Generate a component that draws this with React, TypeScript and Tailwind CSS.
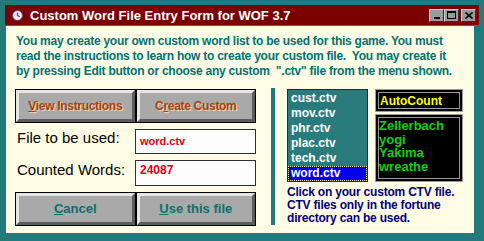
import { type ReactNode } from 'react'

const font = { fontFamily: '"Liberation Sans", Arial, sans-serif' }

function BevelButton({ children, className = '' }: { children: ReactNode; className?: string }) {
  return (
    <div className="flex-1 border border-black">
      <div className={`flex h-full items-center justify-center border-t-[3px] border-l-[3px] border-b-[3px] border-r-[3px] border-t-[#e6e6e6] border-l-[#e6e6e6] border-b-[#5c5c5c] border-r-[#5c5c5c] bg-[#a9a9a9] ${className}`}>
        {children}
      </div>
    </div>
  )
}

function TitleButton({ children }: { children: ReactNode }) {
  return (
    <div className="flex h-[13px] w-[15px] items-center justify-center border border-t-[#d0d0d0] border-l-[#d0d0d0] border-b-[#303030] border-r-[#303030] bg-[#9a9a9a]">
      {children}
    </div>
  )
}

const files = ['cust.ctv', 'mov.ctv', 'phr.ctv', 'plac.ctv', 'tech.ctv', 'word.ctv']
const words = ['Zellerbach', 'yogi', 'Yakima', 'wreathe']

export default function App() {
  return (
    <div className="h-[241px] w-[484px] bg-[#237a7a] p-[5px] pb-[8px]" style={font}>
      <div className="flex h-full flex-col">
        {/* title bar */}
        <div className="flex h-[20px] items-center bg-[#7b0000] pl-[7px] pr-[3px]">
          <svg width="11" height="11" viewBox="0 0 11 11" className="mr-[7px]">
            <circle cx="5.5" cy="5.5" r="5" fill="#f4e8f4" stroke="#6a3a7a" strokeWidth="1" />
            <path d="M5.5 2.5 V5.5 L7.8 6.8" stroke="#6a3a7a" strokeWidth="1.2" fill="none" />
          </svg>
          <span className="text-[13px] font-bold leading-none text-white">Custom Word File Entry Form for WOF 3.7</span>
          <div className="ml-auto flex items-center">
            <TitleButton>
              <div className="mt-[6px] h-[2px] w-[6px] bg-black" />
            </TitleButton>
            <TitleButton>
              <div className="h-[8px] w-[9px] border border-t-2 border-black" />
            </TitleButton>
            <div className="ml-[2px]">
              <TitleButton>
                <svg width="8" height="7" viewBox="0 0 8 7">
                  <path d="M0.5 0.5 L7.5 6.5 M7.5 0.5 L0.5 6.5" stroke="black" strokeWidth="1.6" />
                </svg>
              </TitleButton>
            </div>
          </div>
        </div>

        {/* content */}
        <div className="mt-[1px] mr-[5px] ml-[1px] flex flex-1 flex-col bg-[#fffde6] pl-[10px] pt-[8px]">
          <p className="text-[12px] font-bold leading-[15px] tracking-[-0.25px] text-[#007272]">
            You may create your own custom word list to be used for this game. You must
            <br />
            read the instructions to learn how to create your custom file.&nbsp; You may create it
            <br />
            by pressing Edit button or choose any custom &nbsp;".ctv" file from the menu shown.
          </p>

          <div className="mt-[10px] flex">
            {/* left column */}
            <div className="-ml-px flex w-[241px] flex-col">
              <div className="flex h-[34px]">
                <BevelButton>
                  <span className="text-[12px] font-bold tracking-[-0.3px] text-[#a4420e] [text-shadow:1px_1px_0_#f2d2b0]">
                    <span className="underline">V</span>iew Instructions
                  </span>
                </BevelButton>
                <BevelButton>
                  <span className="text-[12px] font-bold tracking-[-0.3px] text-[#a4420e] [text-shadow:1px_1px_0_#f2d2b0]">
                    C<span className="underline">r</span>eate Custom
                  </span>
                </BevelButton>
              </div>

              <div className="mt-[6px] flex h-[25px]">
                <span className="w-[120px] pl-[2px] pt-[1px] text-[15px] leading-[16px] text-black">File to be used:</span>
                <div className="flex-1 border border-[#303030] bg-[#fdfdfd] pl-[4px] pt-[4px] text-[11px] font-bold leading-[14px] text-[#e00010]">
                  word.ctv
                </div>
              </div>

              <div className="mt-[6px] flex h-[26px]">
                <span className="w-[120px] pl-[2px] pt-[2px] text-[15px] leading-[16px] text-black">Counted Words:</span>
                <div className="flex-1 border border-[#303030] bg-[#fdfdfd] pl-[4px] pt-[2px] text-[12px] font-bold leading-[14px] text-[#e00010]">
                  24087
                </div>
              </div>

              <div className="mt-[6px] flex h-[34px]">
                <BevelButton>
                  <span className="text-[13px] font-bold text-[#0a7070]">
                    <span className="underline">C</span>ancel
                  </span>
                </BevelButton>
                <BevelButton>
                  <span className="text-[13px] font-bold text-[#0a7070]">
                    <span className="underline">U</span>se this file
                  </span>
                </BevelButton>
              </div>
            </div>

            {/* divider */}
            <div className="ml-[15px] -mt-[1px] h-[137px] w-[4px] bg-[#237a7a]" />

            {/* right column */}
            <div className="ml-[12px] flex flex-col">
              <div className="flex">
                <div className="flex h-[93px] w-[81px] flex-col border border-[#1a3030] bg-[#2a7c7c] pt-[1px]">
                  {files.map((f) => (
                    <div
                      key={f}
                      className={`px-[2px] text-[12px] font-bold leading-[13px] text-white ${
                        f === 'word.ctv' ? 'border border-dotted border-[#ffffc0] bg-[#0000f0]' : 'border border-transparent'
                      }`}
                    >
                      {f}
                    </div>
                  ))}
                </div>
                <div className="ml-[7px] flex w-[88px] flex-col">
                  <div className="h-[23px] border border-[#9a9a9a] bg-black p-[2px]">
                    <div className="h-full border border-[#9a9a9a] pl-[1px] text-[12px] font-bold leading-[16px] text-[#ffff00]">AutoCount</div>
                  </div>
                  <div className="mt-[2px] h-[68px] border border-[#9a9a9a] bg-black p-[2px]">
                    <div className="h-full border border-[#9a9a9a] pt-[1px] text-[13px] font-bold leading-[13.5px] text-[#10d010]">
                      {words.map((w) => (
                        <div key={w}>{w}</div>
                      ))}
                    </div>
                  </div>
                </div>
              </div>
              <p className="mt-[4px] text-[12px] font-bold leading-[13px] tracking-[-0.2px] text-[#00007c]">
                Click on your custom CTV file.
                <br />
                CTV files only in the fortune
                <br />
                directory can be used.
              </p>
            </div>
          </div>
        </div>
      </div>
    </div>
  )
}
